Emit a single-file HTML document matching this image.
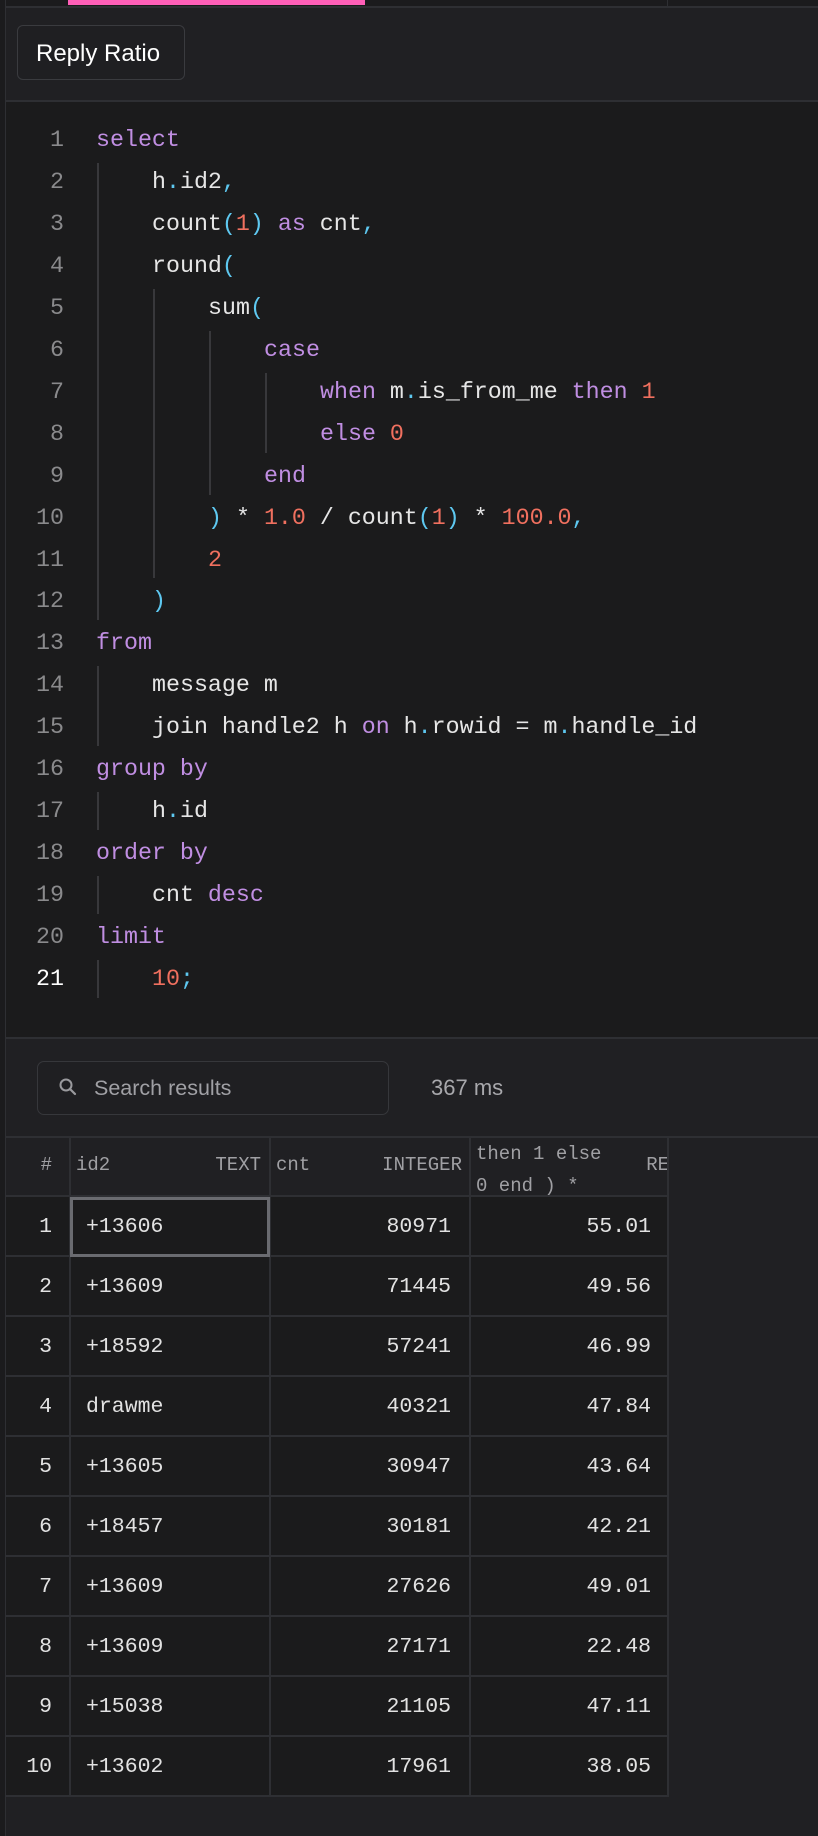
<!DOCTYPE html>
<html><head><meta charset="utf-8"><style>
*{margin:0;padding:0;box-sizing:border-box}
body{width:818px;height:1836px;background:#202023;position:relative;overflow:hidden;font-family:"Liberation Sans",sans-serif}
.a{position:absolute}
.code{font-family:"Liberation Mono",monospace;font-size:23.3px;color:#e6e6e6;white-space:pre;line-height:42px;height:42px}
.ln{font-family:"Liberation Mono",monospace;font-size:23.3px;color:#8a8a8c;line-height:42px;width:64px;text-align:right;left:0}
.k{color:#c08ee2}.n{color:#f0705f}.p{color:#5ec8f0}
.g{position:absolute;width:2px;background:#38383b}
.cell{position:absolute;font-family:"Liberation Mono",monospace;font-size:21.5px;color:#e2e2e2;line-height:60px;height:60px}
.h{font-family:"Liberation Mono",monospace;font-size:19px;color:#a0a0a4;position:absolute}
</style></head><body>
<div class="a" style="left:0;top:0;width:818px;height:6px;background:#1b1b1d"></div>
<div class="a" style="left:68px;top:0;width:297px;height:5px;background:#ff5fb8"></div>
<div class="a" style="left:667px;top:0;width:1px;height:6px;background:#2e2f33"></div>
<div class="a" style="left:0;top:6px;width:818px;height:2px;background:#2e2f33"></div>
<div class="a" style="left:5px;top:0;width:1px;height:1836px;background:#2e2f33"></div>
<div class="a" style="left:0;top:0;width:5px;height:1836px;background:#1b1b1d"></div>
<div class="a" style="left:17px;top:25px;width:168px;height:55px;border:1.5px solid #3a3b3f;border-radius:6px;background:#1f1f22;color:#fff;font-size:24px;line-height:55px;padding-left:18px">Reply Ratio</div>
<div class="a" style="left:6px;top:100px;width:812px;height:2px;background:#2e2f33"></div>
<div class="a" style="left:6px;top:102px;width:812px;height:935px;background:#1b1b1c"></div>
<div id="ed"></div>
<div class="a" style="left:6px;top:1037px;width:812px;height:2px;background:#2e2f33"></div>
<div class="a" style="left:37px;top:1061px;width:352px;height:54px;border:1.5px solid #36373b;border-radius:7px;background:#1f1f22"></div>
<svg class="a" style="left:57px;top:1076px" width="22" height="22" viewBox="0 0 22 22"><circle cx="9" cy="9" r="5.5" fill="none" stroke="#9a9a9e" stroke-width="2"/><line x1="13" y1="13" x2="18" y2="18" stroke="#9a9a9e" stroke-width="2.2" stroke-linecap="round"/></svg>
<div class="a" style="left:94px;top:1073px;font-size:21.5px;color:#a0a0a5;line-height:30px">Search results</div>
<div class="a" style="left:431px;top:1073px;font-size:22px;color:#a8a8ac;line-height:30px">367 ms</div>
<div class="a" style="left:6px;top:1136px;width:812px;height:2px;background:#2e2f33"></div>
<div id="tb"></div>
<script>
const L=[
[0,'<span class="k">select</span>'],
[1,'h<span class="p">.</span>id2<span class="p">,</span>'],
[1,'count<span class="p">(</span><span class="n">1</span><span class="p">)</span> <span class="k">as</span> cnt<span class="p">,</span>'],
[1,'round<span class="p">(</span>'],
[2,'sum<span class="p">(</span>'],
[3,'<span class="k">case</span>'],
[4,'<span class="k">when</span> m<span class="p">.</span>is_from_me <span class="k">then</span> <span class="n">1</span>'],
[4,'<span class="k">else</span> <span class="n">0</span>'],
[3,'<span class="k">end</span>'],
[2,'<span class="p">)</span> * <span class="n">1.0</span> / count<span class="p">(</span><span class="n">1</span><span class="p">)</span> * <span class="n">100.0</span><span class="p">,</span>'],
[2,'<span class="n">2</span>'],
[1,'<span class="p">)</span>'],
[0,'<span class="k">from</span>'],
[1,'message m'],
[1,'join handle2 h <span class="k">on</span> h<span class="p">.</span>rowid = m<span class="p">.</span>handle_id'],
[0,'<span class="k">group by</span>'],
[1,'h<span class="p">.</span>id'],
[0,'<span class="k">order by</span>'],
[1,'cnt <span class="k">desc</span>'],
[0,'<span class="k">limit</span>'],
[1,'<span class="n">10</span><span class="p">;</span>']];
const LH=41.95,T0=119;let h='';
L.forEach((l,i)=>{const t=T0+i*LH;
h+=`<div class="a ln" style="top:${t}px;${i==20?'color:#fff':''}">${i+1}</div>`;
h+=`<div class="a code" style="top:${t}px;left:${96+l[0]*56}px">${l[1]}</div>`;});
[[97,2,12],[153,5,11],[209,6,9],[265,7,8],[97,14,15],[97,17,17],[97,19,19],[97,21,21]].forEach(g=>{
h+=`<div class="g" style="left:${g[0]}px;top:${T0+(g[1]-1)*LH+2}px;height:${(g[2]-g[1]+1)*LH-4}px"></div>`;});
document.getElementById('ed').innerHTML=h;
const R=[['+13606','80971','55.01'],['+13609','71445','49.56'],['+18592','57241','46.99'],['drawme','40321','47.84'],['+13605','30947','43.64'],['+18457','30181','42.21'],['+13609','27626','49.01'],['+13609','27171','22.48'],['+15038','21105','47.11'],['+13602','17961','38.05']];
let s='';const B='#2e2f33';
s+=`<div class="a" style="left:6px;top:1138px;width:663px;height:58px;background:#202023"></div>`;
s+=`<div class="a" style="left:6px;top:1196px;width:663px;height:600px;background:#1b1b1c"></div>`;
s+=`<div class="h" style="left:0;width:52px;text-align:right;top:1154px">#</div>`;
s+=`<div class="h" style="left:76px;top:1154px">id2</div><div class="h" style="left:180px;width:81px;text-align:right;top:1154px">TEXT</div>`;
s+=`<div class="h" style="left:276px;top:1154px">cnt</div><div class="h" style="left:360px;width:102px;text-align:right;top:1154px">INTEGER</div>`;
s+=`<div class="h" style="left:476px;top:1138px;line-height:32px">then 1 else<br>0 end ) *</div><div class="h" style="left:600px;width:69px;text-align:right;top:1154px">RE</div>`;
[69,269,469,667].forEach(x=>s+=`<div class="a" style="left:${x}px;top:1136px;width:2px;height:661px;background:${B}"></div>`);
for(let i=0;i<=10;i++)s+=`<div class="a" style="left:6px;top:${1195+i*60}px;width:663px;height:2px;background:${B}"></div>`;
R.forEach((r,i)=>{const t=1197+i*60;
s+=`<div class="cell" style="left:0;width:52px;text-align:right;top:${t}px">${i+1}</div>`;
s+=`<div class="cell" style="left:86px;top:${t}px">${r[0]}</div>`;
s+=`<div class="cell" style="left:300px;width:151px;text-align:right;top:${t}px">${r[1]}</div>`;
s+=`<div class="cell" style="left:500px;width:151px;text-align:right;top:${t}px">${r[2]}</div>`;});
s+=`<div class="a" style="left:70px;top:1197px;width:200px;height:60px;border:3px solid #6a6b70"></div>`;
document.getElementById('tb').innerHTML=s;
</script>
</body></html>
